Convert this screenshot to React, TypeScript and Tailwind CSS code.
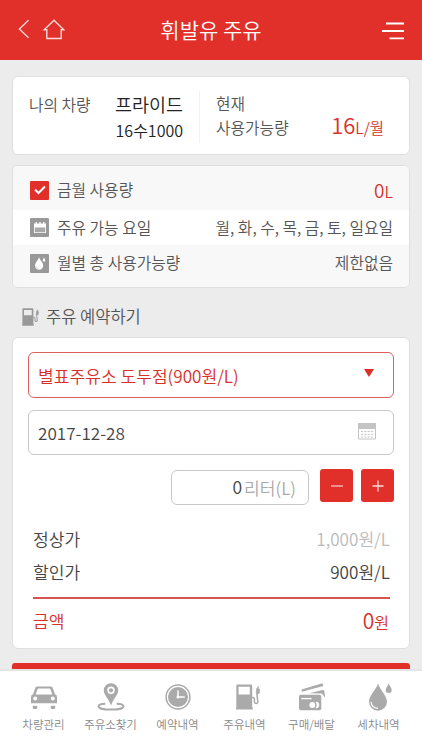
import type { ReactNode } from "react";
import { clsx } from "clsx";

const CARD = "rounded-md border border-[#dfdfdf] bg-white";

function PumpIcon({ className }: { className?: string }) {
    return (
        <svg viewBox="0 0 24 26" className={className} fill="none">
            <path fillRule="evenodd" clipRule="evenodd" fill="currentColor" d="M1.6.5h13.2q1.4 0 1.4 1.4v21.6h.6v2H0v-2h.3V1.9Q.3.5 1.6.5ZM2.6 2.8v7.6h11.2V2.8Z" />
            <path d="M16 13.5c3.2-.3 2.3 2 2.4 4 .1 2.6 3.4 2.6 3.4 0 0-3-1.6-5-.5-8.5" stroke="currentColor" strokeWidth="1.5" />
            <path d="M20.1 9.5l.4-4.8 2-2.6V5l1.5.3-.8 4.5z" fill="currentColor" stroke="currentColor" strokeWidth=".4" />
        </svg>
    );
}

function CarIcon() {
    return (
        <svg viewBox="0 0 28 26" className="h-[26px] w-7" fill="currentColor">
            <path fillRule="evenodd" clipRule="evenodd" d="M7.3 2.500h13.400q1.500 0 2 1.400l2.300 6.300q2 .7 2 3v6H1v-6q0-2.300 2-3l2.300-6.300Q5.800 2.500 7.300 2.500Zm.6 2L5.600 10.600h16.800L20.100 4.500Z" />
            <circle cx="5.200" cy="14.500" r="2" fill="#fff" />
            <circle cx="22.800" cy="14.500" r="2" fill="#fff" />
            <rect x="2.800" y="21.800" width="4.400" height="3.300" rx=".8" />
            <rect x="20.800" y="21.800" width="4.400" height="3.300" rx=".8" />
        </svg>
    );
}

function PlaceIcon() {
    return (
        <svg viewBox="0 0 28 28" className="h-7 w-7">
            <path d="M8.3 20.8C4.3 21 1.500 22.100 1.500 23.400c0 1.800 5.500 3.200 12.500 3.200s12.500-1.400 12.500-3.200c0-1.300-2.800-2.400-6.800-2.600" fill="none" stroke="currentColor" strokeWidth="2" />
            <path d="M14 .2a7.200 7.200 0 0 0-7.200 7.200C6.800 12 11.500 15 14 22.500 16.500 15 21.200 12 21.200 7.400A7.200 7.200 0 0 0 14 .2Z" fill="currentColor" />
            <circle cx="14" cy="7.300" r="2.900" fill="none" stroke="#fff" strokeWidth="1.600" />
        </svg>
    );
}

function ClockIcon() {
    return (
        <svg viewBox="0 0 26 26" className="h-[26px] w-[26px]" fill="none">
            <circle cx="13" cy="13" r="11.900" stroke="currentColor" strokeWidth="1.500" />
            <circle cx="13" cy="13" r="10" fill="currentColor" />
            <path d="M13 6.500V13h6.800" stroke="#fff" strokeWidth="1.500" />
            <circle cx="13" cy="13" r="1.500" fill="#fff" />
        </svg>
    );
}

function CardsIcon() {
    return (
        <svg viewBox="0 0 28 28" className="h-7 w-7" fill="currentColor">
            <path d="M3.500 6.500 24.400.2l1 2.800L3.800 8.700Z" />
            <path d="m11.500 10.300 13-3.200q1.500-.3 1.800 1l.9 6.500-3.500-4.200Z" />
            <rect x="1" y="11.800" width="22.300" height="15.400" rx="1.800" />
            <path d="M3.300 15.600h10.300" stroke="#fff" strokeWidth="1.300" />
            <circle cx="14.300" cy="22" r="2.900" fill="#fff" />
            <path d="M18 19.100a2.900 2.900 0 0 1 0 5.800c1.500-1.700 1.500-4.100 0-5.800Z" fill="#fff" stroke="#fff" />
        </svg>
    );
}

function DropsIcon({ className, shine = "#fff" }: { className?: string; shine?: string }) {
    return (
        <svg viewBox="0 0 26 28" className={className} fill="currentColor">
            <path d="M11 .5C9 7 2 12.500 2 18.700a9 9 0 0 0 18 0C20 12.500 13 7 11 .5Z" />
            <path d="M4 18.800c.3 4 3 6.300 7 6.500" fill="none" stroke={shine} strokeWidth="1.200" />
            <path d="M21.700.2c-.8 2.800-3 4.400-3 6.900a3 3 0 0 0 6 0c0-2.500-2.200-4.100-3-6.900Z" />
        </svg>
    );
}

function IconBox({ active, children }: { active?: boolean; children: ReactNode }) {
    return (
        <span className={clsx("mr-2 flex h-[19px] w-[19px] items-center justify-center rounded-[1px] text-white", active ? "bg-[#e1302a]" : "bg-[#999]")}>
            {children}
        </span>
    );
}

function Header() {
    return (
        <header className="flex h-[60px] shrink-0 items-center justify-between bg-[#e1302a] pr-[18px] pb-[2px] pl-[18px] text-white">
            <div className="flex w-[60px] items-center gap-3.5">
                <svg viewBox="0 0 12 20" className="h-5 w-[11px]" fill="none" stroke="#fbdad8" strokeWidth="1.500">
                    <path d="M11.500.5 1.500 10l10 9.500" />
                </svg>
                <svg viewBox="0 0 22 21" className="h-[21px] w-[22px]" fill="none" stroke="#fbdad8" strokeWidth="1.400">
                    <path d="M3.800 10.700H1.200L11 1.200l9.800 9.500h-2.600V19.500H3.800Z" />
                </svg>
            </div>
            <h1 className="text-[21px] leading-[58px] font-[350]">휘발유 주유</h1>
            <div className="flex w-[60px] justify-end">
                <svg viewBox="0 0 22 18" className="mt-[3px] h-[18px] w-[22px]" stroke="#fff" strokeWidth="1.800">
                    <path d="M4 1.500h18M0 9h22M7.500 16.300H22" />
                </svg>
            </div>
        </header>
    );
}

function Vehicle() {
    return (
        <section className={clsx(CARD, "flex h-[79px] pt-[14px]")}>
            <div className="flex h-[52px] w-[187px] justify-between border-r border-[#f1f1f1] pr-4 pl-4">
                <span className="text-[15.800px] leading-[27px] text-[#555]">나의 차량</span>
                <div className="text-right text-[#222]">
                    <p className="text-[18.500px] leading-[27px]">프라이드</p>
                    <p className="text-[16px] leading-[25px]">16수1000</p>
                </div>
            </div>
            <div className="flex h-[52px] flex-1 items-start justify-between pr-[25px] pl-4">
                <p className="pt-px text-[15.800px] leading-6 text-[#555]">현재<br />사용가능량</p>
                <p className="pt-[20px] text-[15.500px] leading-[27px] text-[#d9302b]"><span className="text-[22px]">16</span>L/월</p>
            </div>
        </section>
    );
}

function Usage() {
    return (
        <section className={clsx(CARD, "mt-[10px] h-[123px] overflow-hidden text-[15.800px] text-[#555]")}>
            <div className="flex h-11 items-center bg-[#f8f8f8] pt-1 pr-4 pl-[17px]">
                <IconBox active>
                    <svg viewBox="0 0 12 10" className="h-2.5 w-3" fill="none" stroke="#fff" strokeWidth="2">
                        <path d="m1 4.500 3.500 3.500L11 1.500" />
                    </svg>
                </IconBox>
                금월 사용량
                <span className="ml-auto text-[#d9302b]"><span className="text-[19px]">0</span>L</span>
            </div>
            <div className="flex h-[35px] items-center pr-4 pl-[17px]">
                <IconBox>
                    <svg viewBox="0 0 12 11" className="h-[11px] w-3" fill="#fff">
                        <path d="M0 1.500h1.500V0h1.400v1.500h2.400V0h1.400v1.500h2.400V0h1.400v1.500H12V11H0ZM.8 5.500v4.700h10.400V5.500Z" fillRule="evenodd" />
                        <path d="M.8 5.500h10.400v4.700H.8Z" opacity=".15" />
                    </svg>
                </IconBox>
                주유 가능 요일
                <span className="ml-auto">월, 화, 수, 목, 금, 토, 일요일</span>
            </div>
            <div className="flex h-[42px] items-center bg-[#f8f8f8] pr-4 pb-[6px] pl-[17px]">
                <IconBox>
                    <DropsIcon className="h-[13px] w-3" shine="#bbb" />
                </IconBox>
                월별 총 사용가능량
                <span className="ml-auto">제한없음</span>
            </div>
        </section>
    );
}

function Booking() {
    return (
        <section className={clsx(CARD, "h-[312px] px-[15px] pt-[14px] text-[17.100px] text-[#444]")}>
            <div className="flex h-[46px] items-center justify-between rounded-md border border-[#dc5f5e] pr-[19px] pl-[9px] text-[#d9302b]">
                <span className="pt-0.5">별표주유소 도두점(900원/L)</span>
                <svg viewBox="0 0 10 8" className="mb-1 h-2 w-2.5" fill="#d9302b">
                    <path d="M0 0h10L5 8Z" />
                </svg>
            </div>
            <div className="mt-3 flex h-[45px] items-center justify-between rounded-md border border-[#c8c8c8] pr-[17px] pl-[9px]">
                <span className="pt-px">2017-12-28</span>
                <svg viewBox="0 0 18 17" className="mb-0.5 h-[17px] w-[18px]" fill="none" stroke="#c4c4c4">
                    <path d="M.5.500h17v15.500H.5Z" />
                    <path d="M0 3h18" strokeWidth="6" />
                    <path d="M3 8.500h12M3 11.300h12M3 14h12" strokeDasharray="2 1.300" />
                </svg>
            </div>
            <div className="mt-[14px] flex justify-end">
                <div className="mt-[1px] mr-[11px] flex h-[35px] w-[138px] items-center justify-end gap-[2px] rounded-md border border-[#c8c8c8] pr-3">
                    <span className="text-[17.500px]">0</span>
                    <span className="text-[#aaa]">리터(L)</span>
                </div>
                <button className="mr-2 flex h-[33px] w-[33px] items-center justify-center rounded-[3px] bg-[#e1302a]">
                    <svg viewBox="0 0 12 12" className="h-3 w-3" stroke="#f9d0ce" strokeWidth="1.200"><path d="M0 6h12" /></svg>
                </button>
                <button className="flex h-[33px] w-[33px] items-center justify-center rounded-[3px] bg-[#e1302a]">
                    <svg viewBox="0 0 12 12" className="h-3 w-3" stroke="#fbdcda" strokeWidth="1.300"><path d="M.5 6h11M6 .5v11" /></svg>
                </button>
            </div>
            <dl className="mr-1 ml-[5px] mt-[17px]">
                <div className="flex justify-between leading-[33px]">
                    <dt>정상가</dt>
                    <dd className="text-[#bbb]">1,000원/L</dd>
                </div>
                <div className="flex justify-between leading-[33px]">
                    <dt>할인가</dt>
                    <dd>900원/L</dd>
                </div>
                <div className="mt-[9px] flex justify-between border-t-2 border-[#d65350] leading-[43px] text-[#d9302b]">
                    <dt>금액</dt>
                    <dd className="pr-px text-[16px]"><span className="text-[21px]">0</span>원</dd>
                </div>
            </dl>
        </section>
    );
}

const tabs = [
    { label: "차량관리", icon: <CarIcon /> },
    { label: "주유소찾기", icon: <PlaceIcon /> },
    { label: "예약내역", icon: <ClockIcon /> },
    { label: "주유내역", icon: <PumpIcon className="ml-[6px] h-[26px] w-6" /> },
    { label: "구매/배달", icon: <CardsIcon /> },
    { label: "세차내역", icon: <DropsIcon className="ml-[3px] h-7 w-[26px]" /> },
];

export default function App() {
    return (
        <div className="flex h-[750px] w-[422px] flex-col overflow-hidden bg-[#ececec] font-['Noto_Sans_CJK_KR',sans-serif] font-[350]">
            <Header />
            <main className="flex-1 overflow-hidden px-3 pt-4">
                <Vehicle />
                <Usage />
                <h2 className="flex h-[49px] items-center pt-2 pl-[10px] text-[16.500px] text-[#555]">
                    <PumpIcon className="mr-[7px] h-[18px] w-[17px] text-[#999]" />
                    주유 예약하기
                </h2>
                <Booking />
                <button aria-label="예약" className="mt-[14px] block h-12 w-full rounded-[3px] bg-[#e1302a]" />
            </main>
            <nav className="grid h-[81px] shrink-0 grid-cols-6 border-t-2 border-[#e4e4e4] bg-white px-[10px] text-[#aaa]">
                {tabs.map((tab) => (
                    <div key={tab.label} className="flex flex-col items-center pt-[12px]">
                        <div className="flex h-7 items-center">{tab.icon}</div>
                        <span className="mt-[5px] text-[11.500px] leading-4 whitespace-nowrap text-[#888]">{tab.label}</span>
                    </div>
                ))}
            </nav>
        </div>
    );
}
